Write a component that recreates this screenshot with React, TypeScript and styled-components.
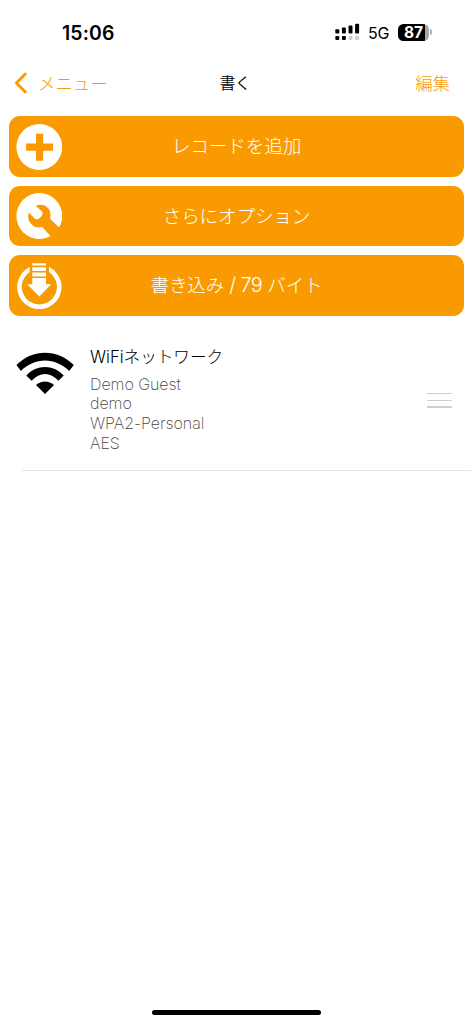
import React from "react";
import styled, { createGlobalStyle } from "styled-components";

const ORANGE = "#f99b00";

const GlobalStyle = createGlobalStyle`
  *, *::before, *::after { box-sizing: border-box; }
  body {
    margin: 0;
    background: #fff;
    font-family: Inter, "Noto Sans CJK JP", sans-serif;
    font-weight: 300;
  }
`;

const Screen = styled.main`
  display: flex;
  flex-direction: column;
  width: 473px;
  height: 1024px;
  overflow: hidden;
  background: #fff;
`;

const StatusBar = styled.header`
  display: flex;
  align-items: center;
  justify-content: space-between;
  height: 64px;
  padding: 0 41px 0 62px;
`;

const Clock = styled.time`
  margin-top: 2px;
  font-size: 19.4px;
  line-height: 24px;
  font-weight: 600;
  letter-spacing: 0.15px;
`;

const Indicators = styled.div`
  display: flex;
  align-items: center;
`;

const Network = styled.span`
  width: 22px;
  margin: 1px 8px 0 8px;
  font-size: 16px;
  line-height: 20px;
  font-weight: 400;
  letter-spacing: -0.3px;
`;

const Battery = styled.div`
  display: flex;
  align-items: center;
  gap: 1px;
`;

const BatteryBody = styled.div`
  width: 31px;
  height: 17px;
  border-radius: 5.5px;
  background: linear-gradient(90deg, #000 27px, #a8a8a8 27px);
  color: #fff;
  font-size: 15.5px;
  line-height: 17px;
  font-weight: 700;
  text-align: center;
`;

const BatteryTip = styled.div`
  width: 2px;
  height: 6px;
  border-radius: 0 2px 2px 0;
  background: #b0b0b0;
`;

const NavBar = styled.nav`
  display: grid;
  grid-template-columns: 1fr auto 1fr;
  align-items: center;
  height: 40px;
  padding: 0 23px 4px 14px;
  font-size: 17.4px;
`;

const BackLink = styled.span`
  display: flex;
  align-items: center;
  gap: 10px;
  color: ${ORANGE};
  letter-spacing: 0.1px;

  svg { margin-top: 2px; }
`;

const NavTitle = styled.h1`
  margin: 0 0 0 6px;
  font-size: 16px;
  font-weight: 350;
  letter-spacing: -0.6px;
`;

const EditLink = styled.span`
  justify-self: end;
  color: ${ORANGE};
`;

const Actions = styled.section`
  display: flex;
  flex-direction: column;
  gap: 9px;
  padding: 12px 9px 0;
`;

const ActionButton = styled.button<{ $spacing?: string }>`
  display: grid;
  grid-template-columns: 46px 1fr 46px;
  align-items: center;
  width: 455px;
  height: 60.6px;
  padding: 0 7px;
  border: 0;
  border-radius: 11px;
  background: ${ORANGE};
  color: #fff;
  font: inherit;
  font-size: 18.6px;
  line-height: 28px;
  letter-spacing: ${({ $spacing }) => $spacing ?? "0"};
  white-space: nowrap;

  svg { display: block; margin-top: 1px; }
`;

const Amount = styled.span`
  font-size: 20px;
  letter-spacing: -0.7px;
`;

const Record = styled.article`
  display: flex;
  align-items: flex-start;
  width: 449px;
  height: 155px;
  margin-left: 22px;
  border-bottom: 1px solid #e4e4e4;
`;

const WifiIcon = styled.svg`
  flex: none;
  margin: 36px 0 0 -6px;
`;

const Details = styled.div`
  width: 320px;
  margin: 29px 0 0 16px;
`;

const RecordTitle = styled.h2`
  margin: 0 0 6px;
  font-size: 16.6px;
  line-height: 24px;
  font-weight: 300;
  color: #000;
`;

const DetailLine = styled.p`
  margin: 0;
  font-size: 16px;
  line-height: 19.7px;
  font-weight: 200;
  color: #444;
  letter-spacing: -0.05px;
`;

const DragHandle = styled.div`
  display: flex;
  flex-direction: column;
  justify-content: space-between;
  width: 25px;
  height: 15px;
  margin: 77px 0 0 17px;
`;

const HandleLine = styled.i`
  height: 1.5px;
  background: #cfcfcf;
`;

const HomeIndicator = styled.div`
  width: 169px;
  height: 5px;
  margin: auto auto 9px 152px;
  border-radius: 3px;
  background: #000;
`;

const SignalIcon = () => (
  <svg width="25" height="18" viewBox="0 0 25 18">
    <rect x="0.3" y="6.2" width="4" height="4.2" rx="1" />
    <rect x="6.9" y="4.4" width="4" height="6" rx="1" />
    <rect x="13.5" y="2.6" width="4" height="7.8" rx="1" />
    <rect x="20.1" y="0.8" width="4" height="9.6" rx="1" />
    <rect x="0.3" y="13" width="4" height="4" rx="1" />
    <rect x="6.9" y="13" width="4" height="4" rx="1" />
    <rect x="13.5" y="13" width="4" height="4" rx="1" fill="#cecece" />
    <rect x="20.1" y="13" width="4" height="4" rx="1" fill="#cecece" />
  </svg>
);

const BackIcon = () => (
  <svg width="14" height="22" viewBox="0 0 14 22">
    <path d="M11.3 2 2.4 11l8.9 9" fill="none" stroke={ORANGE} strokeWidth="2.8" strokeLinecap="round" strokeLinejoin="round" />
  </svg>
);

const AddIcon = () => (
  <svg width="46" height="46" viewBox="0 0 46 46">
    <circle cx="23.3" cy="23" r="22.9" fill="#fff" />
    <path d="M20 9.7h7.2v9.8h9.8v7.2h-9.8v10.1H20V26.700h-9.900V19.500H20z" fill={ORANGE} />
  </svg>
);

const WrenchIcon = () => (
  <svg width="46" height="46" viewBox="0 0 46 46">
    <circle cx="23.3" cy="23" r="22.9" fill="#fff" />
    <path
      d="M19.700 12.700C24.500 11 29.200 11.700 32.200 15.200C34.400 17.800 35.200 21.300 34.200 25.800L44 35.500L35.200 43.800L26.300 34.100C22.300 35.300 18.200 34.100 15.500 31.300C12.300 28.100 11.400 23.800 12.700 19.400L19 25.700Q20.200 26.700 22.200 25.900L24 24.700Q26.400 23 26.400 21Q26.800 19.500 26.300 18.800Z"
      fill={ORANGE}
    />
  </svg>
);

const DownloadIcon = () => (
  <svg width="46" height="46" viewBox="0 0 46 46">
    <path d="M13.700 4A22.200 22.200 0 1 0 33 4V9.100A17.600 17.600 0 1 1 13.700 9.100Z" fill="#fff" />
    <path d="M16.300 0.300H30V2.500H16.300zM16.300 4.200H30V8.100H16.300zM16.300 9.600H30V13.500H16.300zM16.300 15H30V21.200H35.200L23.300 33.500L11.300 21.200H16.300z" fill="#fff" />
  </svg>
);

export default function App() {
  return (
    <>
      <GlobalStyle />
      <Screen>
        <StatusBar>
          <Clock>15:06</Clock>
          <Indicators>
            <SignalIcon />
            <Network>5G</Network>
            <Battery>
              <BatteryBody>87</BatteryBody>
              <BatteryTip />
            </Battery>
          </Indicators>
        </StatusBar>
        <NavBar>
          <BackLink>
            <BackIcon />
            メニュー
          </BackLink>
          <NavTitle>書く</NavTitle>
          <EditLink>編集</EditLink>
        </NavBar>
        <Actions>
          <ActionButton $spacing="-0.1px">
            <AddIcon />
            レコードを追加
          </ActionButton>
          <ActionButton $spacing="-0.15px">
            <WrenchIcon />
            さらにオプション
          </ActionButton>
          <ActionButton $spacing="-0.15px">
            <DownloadIcon />
            <span>書き込み <Amount>/ 79</Amount> バイト</span>
          </ActionButton>
        </Actions>
        <Record>
          <WifiIcon width="58" height="43" viewBox="0 0 58 43">
            <path d="M0.500 13C16.500-3.400 41.500-3.400 57.800 13L53.200 19C39.500 4.900 18.500 4.900 4.900 19Z" />
            <path d="M10.300 23.500C21 12.200 37 12.200 47.700 23.500L42.500 28.800C34.500 19.600 23.600 19.600 15.600 28.800Z" />
            <path d="M20 33C25 28.200 33 28.200 38 33L29 42Z" />
          </WifiIcon>
          <Details>
            <RecordTitle>WiFiネットワーク</RecordTitle>
            <DetailLine>Demo Guest</DetailLine>
            <DetailLine>demo</DetailLine>
            <DetailLine>WPA2-Personal</DetailLine>
            <DetailLine>AES</DetailLine>
          </Details>
          <DragHandle>
            <HandleLine />
            <HandleLine />
            <HandleLine />
          </DragHandle>
        </Record>
        <HomeIndicator />
      </Screen>
    </>
  );
}
